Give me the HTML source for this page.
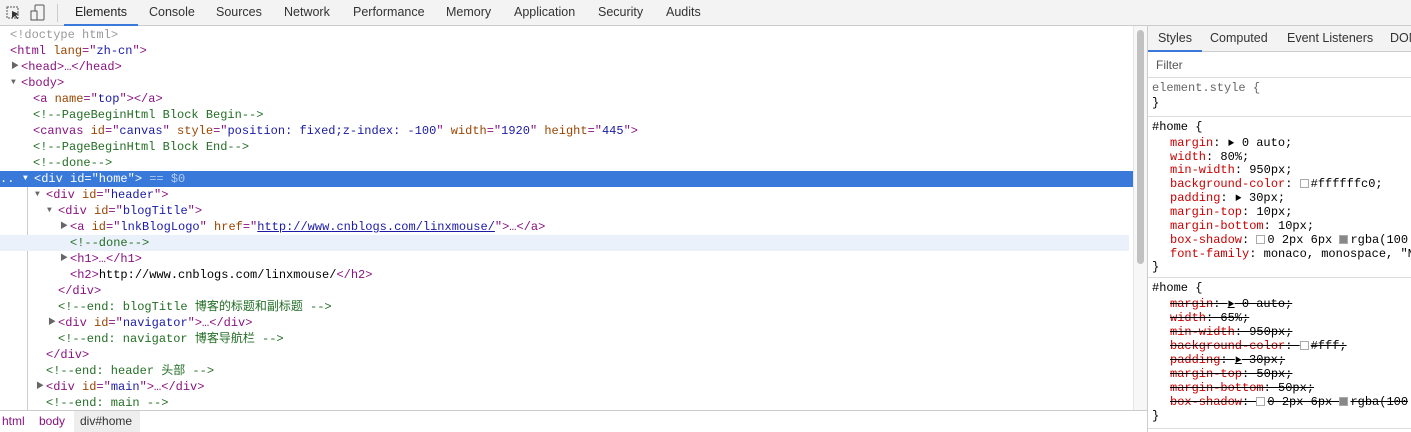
<!DOCTYPE html>
<html><head><meta charset="utf-8"><style>
*{margin:0;padding:0;box-sizing:border-box}
body{width:1411px;height:432px;overflow:hidden;background:#fff;font-family:"Liberation Sans","Noto Sans CJK SC",sans-serif;position:relative}
.top{position:absolute;left:0;top:0;width:1411px;height:26px;background:#f3f3f3;border-bottom:1px solid #ccc}
.tab{position:absolute;top:0;height:26px;line-height:24px;font-size:12.5px;color:#333}
.mono{font-family:"Liberation Mono","Noto Sans CJK SC",monospace;font-size:12px}
.l{position:absolute;height:16px;line-height:16px;white-space:pre;left:0;width:1133px}
.t{color:#881280}.a{color:#994500}.v{color:#1a1aa6}.c{color:#236e25}.g{color:#999}
.tri{position:absolute;font-size:8px;color:#666}
.sel{background:#3879d9;color:#fff}.sel span{color:#fff}
.p{color:#c80000}.s{text-decoration:line-through}
.r{position:absolute;left:1170px;height:14px;line-height:14px;white-space:pre}
.sw{display:inline-block;width:9px;height:9px;border:1px solid #aaa;vertical-align:-1px;margin-right:2px}
.ar{font-size:7px;vertical-align:1px}
</style></head><body>
<div class="top">
<svg style="position:absolute;left:6px;top:5px" width="14" height="16"><rect x="1" y="2" width="11" height="11" fill="none" stroke="#555" stroke-dasharray="2 1"/><path d="M6 6 L13 9 L10 10 L12 14 L11 14 L9 11 L6 13Z" fill="#333"/></svg>
<svg style="position:absolute;left:30px;top:4px" width="16" height="18"><rect x="5" y="1" width="9" height="15" rx="1" fill="none" stroke="#555"/><rect x="1" y="7" width="6" height="9" fill="#f3f3f3" stroke="#555"/></svg>
<div style="position:absolute;left:57px;top:4px;width:1px;height:18px;background:#ccc"></div>
<div class="tab" style="left:64px;width:74px;text-align:center;border-bottom:2px solid #3879d9;color:#222">Elements</div>
<div class="tab" style="left:149px">Console</div>
<div class="tab" style="left:216px">Sources</div>
<div class="tab" style="left:284px">Network</div>
<div class="tab" style="left:353px">Performance</div>
<div class="tab" style="left:446px">Memory</div>
<div class="tab" style="left:514px">Application</div>
<div class="tab" style="left:598px">Security</div>
<div class="tab" style="left:666px">Audits</div>
</div>
<div class="mono">
<div class="l" style="top:27px"><span class="g" style="margin-left:10px">&lt;!doctype html&gt;</span></div>
<div class="l" style="top:43px;padding-left:10px"><span class="t">&lt;html </span><span class="a">lang</span><span class="t">="</span><span class="v">zh-cn</span><span class="t">"&gt;</span></div>
<div class="l" style="top:59px;padding-left:21px"><span class="tri" style="left:11px">▶</span><span class="t">&lt;head&gt;…&lt;/head&gt;</span></div>
<div class="l" style="top:75px;padding-left:21px"><span class="tri" style="left:11px">▼</span><span class="t">&lt;body&gt;</span></div>
<div class="l" style="top:91px;padding-left:33px"><span class="t">&lt;a </span><span class="a">name</span><span class="t">="</span><span class="v">top</span><span class="t">"&gt;&lt;/a&gt;</span></div>
<div class="l" style="top:107px;padding-left:33px"><span class="c">&lt;!--PageBeginHtml Block Begin--&gt;</span></div>
<div class="l" style="top:123px;padding-left:33px"><span class="t">&lt;canvas </span><span class="a">id</span><span class="t">="</span><span class="v">canvas</span><span class="t">" </span><span class="a">style</span><span class="t">="</span><span class="v">position: fixed;z-index: -100</span><span class="t">" </span><span class="a">width</span><span class="t">="</span><span class="v">1920</span><span class="t">" </span><span class="a">height</span><span class="t">="</span><span class="v">445</span><span class="t">"&gt;</span></div>
<div class="l" style="top:139px;padding-left:33px"><span class="c">&lt;!--PageBeginHtml Block End--&gt;</span></div>
<div class="l" style="top:155px;padding-left:33px"><span class="c">&lt;!--done--&gt;</span></div>
<div class="l sel" style="top:171px;padding-left:34px"><span style="position:absolute;left:0">..</span><span class="tri" style="left:23px">▼</span><span>&lt;div id="home"&gt;</span><span style="opacity:.6"> == $0</span></div>
<div style="position:absolute;left:27px;top:187px;width:1px;height:224px;background:#ccc"></div>
<div class="l" style="top:187px;padding-left:46px"><span class="tri" style="left:35px">▼</span><span class="t">&lt;div </span><span class="a">id</span><span class="t">="</span><span class="v">header</span><span class="t">"&gt;</span></div>
<div class="l" style="top:203px;padding-left:58px"><span class="tri" style="left:47px">▼</span><span class="t">&lt;div </span><span class="a">id</span><span class="t">="</span><span class="v">blogTitle</span><span class="t">"&gt;</span></div>
<div class="l" style="top:219px;padding-left:70px"><span class="tri" style="left:60px">▶</span><span class="t">&lt;a </span><span class="a">id</span><span class="t">="</span><span class="v">lnkBlogLogo</span><span class="t">" </span><span class="a">href</span><span class="t">="</span><span class="v" style="text-decoration:underline">http://www.cnblogs.com/linxmouse/</span><span class="t">"&gt;…&lt;/a&gt;</span></div>
<div class="l" style="top:235px;padding-left:70px;background:#eaf1fb;width:1129px"><span class="c">&lt;!--done--&gt;</span></div>
<div class="l" style="top:251px;padding-left:70px"><span class="tri" style="left:60px">▶</span><span class="t">&lt;h1&gt;…&lt;/h1&gt;</span></div>
<div class="l" style="top:267px;padding-left:70px"><span class="t">&lt;h2&gt;</span>http://www.cnblogs.com/linxmouse/<span class="t">&lt;/h2&gt;</span></div>
<div class="l" style="top:283px;padding-left:58px"><span class="t">&lt;/div&gt;</span></div>
<div class="l" style="top:299px;padding-left:58px"><span class="c">&lt;!--end: blogTitle 博客的标题和副标题 --&gt;</span></div>
<div class="l" style="top:315px;padding-left:58px"><span class="tri" style="left:48px">▶</span><span class="t">&lt;div </span><span class="a">id</span><span class="t">="</span><span class="v">navigator</span><span class="t">"&gt;…&lt;/div&gt;</span></div>
<div class="l" style="top:331px;padding-left:58px"><span class="c">&lt;!--end: navigator 博客导航栏 --&gt;</span></div>
<div class="l" style="top:347px;padding-left:46px"><span class="t">&lt;/div&gt;</span></div>
<div class="l" style="top:363px;padding-left:46px"><span class="c">&lt;!--end: header 头部 --&gt;</span></div>
<div class="l" style="top:379px;padding-left:46px"><span class="tri" style="left:36px">▶</span><span class="t">&lt;div </span><span class="a">id</span><span class="t">="</span><span class="v">main</span><span class="t">"&gt;…&lt;/div&gt;</span></div>
<div class="l" style="top:395px;padding-left:46px"><span class="c">&lt;!--end: main --&gt;</span></div>
</div>
<div style="position:absolute;left:0;top:410px;width:1147px;height:22px;background:#fff;border-top:1px solid #ccc;font-size:12px;line-height:21px">
<span style="position:absolute;left:2px;color:#881280">html</span>
<span style="position:absolute;left:39px;color:#881280">body</span>
<span style="position:absolute;left:74px;width:66px;height:21px;background:#eee;padding-left:6px;color:#333">div#home</span>
</div>
<div style="position:absolute;left:1133px;top:26px;width:14px;height:384px;background:#f7f7f7;border-left:1px solid #e5e5e5"></div>
<div style="position:absolute;left:1137px;top:30px;width:7px;height:234px;background:#c1c1c1;border-radius:4px"></div>
<div style="position:absolute;left:1147px;top:26px;width:264px;height:406px;border-left:1px solid #ccc;background:#fff">
<div style="height:26px;background:#f3f3f3;border-bottom:1px solid #ccc;font-size:12.5px;line-height:25px;position:relative;color:#333">
<span style="position:absolute;left:0;width:54px;text-align:center;border-bottom:2px solid #3879d9;height:26px">Styles</span>
<span style="position:absolute;left:62px">Computed</span>
<span style="position:absolute;left:139px">Event Listeners</span>
<span style="position:absolute;left:242px">DOM</span>
</div>
<div style="height:26px;font-size:12px;line-height:26px;padding-left:8px;color:#555;border-bottom:1px solid #ddd">Filter</div>
</div>
<div class="mono">
<div class="r" style="left:1152px;top:81px;color:#666">element.style {</div>
<div class="r" style="left:1152px;top:96px">}</div>
<div style="position:absolute;left:1148px;top:116px;width:263px;height:1px;background:#ddd"></div>
<div class="r" style="left:1152px;top:120px">#home {</div>
<div class="r" style="top:136px"><span class="p">margin</span>: <span class="ar">▶</span> 0 auto;</div>
<div class="r" style="top:150px"><span class="p">width</span>: 80%;</div>
<div class="r" style="top:163px"><span class="p">min-width</span>: 950px;</div>
<div class="r" style="top:177px"><span class="p">background-color</span>: <span class="sw"></span>#ffffffc0;</div>
<div class="r" style="top:191px"><span class="p">padding</span>: <span class="ar">▶</span> 30px;</div>
<div class="r" style="top:205px"><span class="p">margin-top</span>: 10px;</div>
<div class="r" style="top:219px"><span class="p">margin-bottom</span>: 10px;</div>
<div class="r" style="top:233px"><span class="p">box-shadow</span>: <span class="sw"></span>0 2px 6px <span class="sw" style="background:#888"></span>rgba(100</div>
<div class="r" style="top:247px"><span class="p">font-family</span>: monaco, monospace, "N</div>
<div class="r" style="left:1152px;top:260px">}</div>
<div style="position:absolute;left:1148px;top:277px;width:263px;height:1px;background:#ddd"></div>
<div class="r" style="left:1152px;top:281px">#home {</div>
<div class="r s" style="top:297px"><span class="p">margin</span>: <span class="ar">▶</span> 0 auto;</div>
<div class="r s" style="top:311px"><span class="p">width</span>: 65%;</div>
<div class="r s" style="top:325px"><span class="p">min-width</span>: 950px;</div>
<div class="r s" style="top:339px"><span class="p">background-color</span>: <span class="sw"></span>#fff;</div>
<div class="r s" style="top:353px"><span class="p">padding</span>: <span class="ar">▶</span> 30px;</div>
<div class="r s" style="top:367px"><span class="p">margin-top</span>: 50px;</div>
<div class="r s" style="top:381px"><span class="p">margin-bottom</span>: 50px;</div>
<div class="r s" style="top:395px"><span class="p">box-shadow</span>: <span class="sw"></span>0 2px 6px <span class="sw" style="background:#888"></span>rgba(100</div>
<div class="r" style="left:1152px;top:409px">}</div>
<div style="position:absolute;left:1148px;top:428px;width:263px;height:1px;background:#ddd"></div>
</div>
</body></html>
